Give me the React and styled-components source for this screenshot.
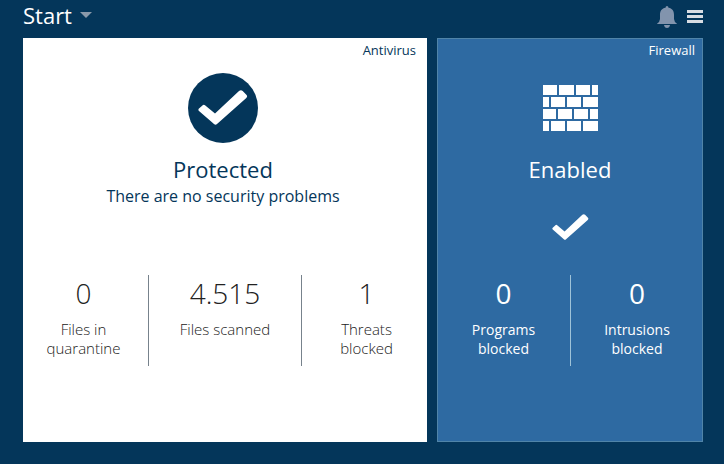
import React from 'react'
import styled, { createGlobalStyle } from 'styled-components'

const navy = '#04365a'
const blue = '#2e6aa2'

const GlobalStyle = createGlobalStyle`
  * {
    box-sizing: border-box;
  }
  body {
    margin: 0;
    background: ${navy};
    font-family: 'Open Sans', 'Noto Sans', sans-serif;
  }
  button {
    padding: 0;
    border: 0;
    background: none;
    color: inherit;
    font: inherit;
    cursor: pointer;
  }
  svg {
    display: block;
  }
`

export const Page = styled.div`
  padding: 0 21px 22px 23px;
`

export const Header = styled.header`
  display: flex;
  align-items: flex-start;
  justify-content: space-between;
  height: 38px;
  color: #fff;
`

export const StartButton = styled.button`
  display: flex;
  align-items: center;
  gap: 8px;
  font-size: 22px;
  line-height: 30px;
`

export const Caret = styled.span`
  border: 6px solid transparent;
  border-top-color: #8a99aa;
  border-bottom: 0;
`

export const Actions = styled.div`
  display: flex;
  align-items: center;
  gap: 10px;
  padding-top: 6px;
`

export const IconButton = styled.button`
  display: block;
`

export const Panels = styled.main`
  display: grid;
  grid-template-columns: 404fr 266fr;
  gap: 10px;
`

export const Panel = styled.section`
  display: flex;
  flex-direction: column;
  padding: 0 0 76px;
  background: ${props => (props.$dark ? blue : '#fff')};
  color: ${props => (props.$dark ? '#fff' : navy)};
  box-shadow: ${props => (props.$dark ? 'inset 0 0 0 1px #5084a8' : 'none')};
`

export const PanelName = styled.h2`
  margin: 0;
  padding: 4px ${props => (props.$dark ? '8px' : '11px')} 0 0;
  font-size: 13px;
  font-weight: 400;
  line-height: 16px;
  text-align: right;
`

export const Summary = styled.div`
  display: flex;
  flex-direction: column;
  align-items: center;
  height: 217px;
  padding: 15px ${props => (props.$dark ? '0' : '4px')} 0 0;
`

export const StatusIcon = styled.div`
  display: flex;
  align-items: center;
  justify-content: center;
  width: 70px;
  height: 70px;
  border-radius: 50%;
  background: ${props => (props.$filled ? navy : 'none')};
`

export const Status = styled.h3`
  margin: 10px 0 0;
  font-size: 22px;
  font-weight: 400;
  line-height: 32px;
`

export const Detail = styled.p`
  margin: 0;
  font-size: 16px;
  line-height: 22px;
`

export const EnabledMark = styled.div`
  margin-top: 29px;
`

export const Stats = styled.dl`
  display: grid;
  grid-template-columns: ${props => props.$columns};
  margin: 0;
  color: ${props => (props.$dark ? '#fff' : '#222')};
  font-size: ${props => (props.$dark ? '14px' : '15px')};
  font-weight: ${props => (props.$dark ? 400 : 300)};
`

export const Stat = styled.div`
  display: flex;
  flex-direction: column-reverse;
  justify-content: flex-end;
  height: 91px;
  border-left: 1px solid ${props => (props.$dark ? '#9fc3d8' : '#77828c')};
  text-align: center;

  &:first-child {
    padding-right: ${props => (props.$dark ? '0' : '4px')};
    border-left: 0;
  }
  &:last-child {
    padding-left: ${props => (props.$dark ? '0' : '4px')};
  }
`

export const StatValue = styled.dd`
  margin: 0;
  font-size: 28px;
  line-height: 36px;
`

export const StatLabel = styled.dt`
  width: 94px;
  margin: 9px auto 0;
  line-height: 19px;
`

const Check = ({ width }) => (
  <svg width={width} viewBox="0 0 50 36" aria-hidden="true">
    <path
      fill="#fff"
      d="M1 18.5 5 15Q6 14.3 7 15.2L17 23.5 41 1Q43 -.5 44.7 1L48.6 5Q49.8 6.4 48.3 8L19 34Q17.500 35.400 16 34L1 21Q-.2 19.700 1 18.500Z"
    />
  </svg>
)

const Bell = () => (
  <svg width="20" height="22" viewBox="0 0 20 22" fill="#8294ad" aria-hidden="true">
    <path d="M10 0Q11.400 0 11.500 1.800C15.700 2.500 17 5.500 17 9V13Q17.200 15.800 19.800 17.600V18H.2V17.600Q2.800 15.800 3 13V9C3 5.500 4.300 2.500 8.500 1.800Q8.600 0 10 0Z" />
    <path d="M7 19H13Q12.500 22 10 22T7 19Z" />
  </svg>
)

const Menu = () => (
  <svg width="16" height="14" viewBox="0 0 16 14" fill="#d8dde3" aria-hidden="true">
    <path d="M0 0H16V3H0ZM0 5H16V8H0ZM0 10H16V13H0Z" />
  </svg>
)

const Wall = () => (
  <svg width="55" height="46" viewBox="0 0 55 46" fill="#fff" aria-hidden="true">
    <path d="M0 0H14V10H0ZM16 0H31V10H16ZM33 0H47V10H33ZM49 0H55V10H49Z" />
    <path d="M0 12H6V22H0ZM8 12H22V22H8ZM24 12H38V22H24ZM40 12H55V22H40Z" />
    <path d="M0 24H13V34H0ZM15 24H29V34H15ZM31 24H45V34H31ZM47 24H55V34H47Z" />
    <path d="M0 36H6V46H0ZM8 36H22V46H8ZM24 36H38V46H24ZM40 36H55V46H40Z" />
  </svg>
)

const antivirusStats = [
  { value: '0', label: 'Files in quarantine' },
  { value: '4.515', label: 'Files scanned' },
  { value: '1', label: 'Threats blocked' },
]

const firewallStats = [
  { value: '0', label: 'Programs blocked' },
  { value: '0', label: 'Intrusions blocked' },
]

const StatList = ({ items, columns, dark }) => (
  <Stats $columns={columns} $dark={dark}>
    {items.map(item => (
      <Stat key={item.label} $dark={dark}>
        <StatLabel>{item.label}</StatLabel>
        <StatValue>{item.value}</StatValue>
      </Stat>
    ))}
  </Stats>
)

export const App = () => (
  <Page>
    <GlobalStyle />
    <Header>
      <StartButton type="button">
        Start
        <Caret />
      </StartButton>
      <Actions>
        <IconButton type="button" aria-label="Notifications">
          <Bell />
        </IconButton>
        <IconButton type="button" aria-label="Menu">
          <Menu />
        </IconButton>
      </Actions>
    </Header>
    <Panels>
      <Panel>
        <PanelName>Antivirus</PanelName>
        <Summary>
          <StatusIcon $filled>
            <Check width={50} />
          </StatusIcon>
          <Status>Protected</Status>
          <Detail>There are no security problems</Detail>
        </Summary>
        <StatList items={antivirusStats} columns="125fr 153fr 126fr" />
      </Panel>
      <Panel $dark>
        <PanelName $dark>Firewall</PanelName>
        <Summary $dark>
          <StatusIcon>
            <Wall />
          </StatusIcon>
          <Status>Enabled</Status>
          <EnabledMark>
            <Check width={37} />
          </EnabledMark>
        </Summary>
        <StatList items={firewallStats} columns="1fr 1fr" dark />
      </Panel>
    </Panels>
  </Page>
)

export default App
